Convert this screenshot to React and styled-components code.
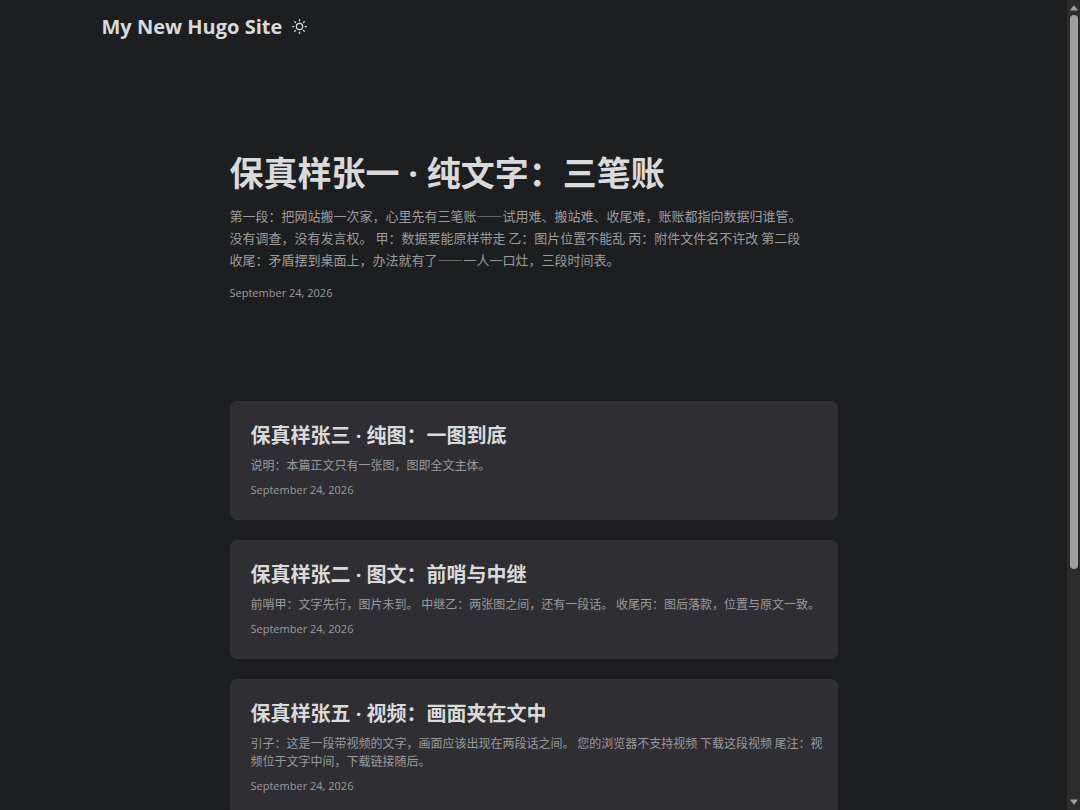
import React from "react";
import styled, { createGlobalStyle } from "styled-components";

const posts = [
  {
    title: "保真样张三 · 纯图：一图到底",
    summary: "说明：本篇正文只有一张图，图即全文主体。",
    date: "September 24, 2026",
  },
  {
    title: "保真样张二 · 图文：前哨与中继",
    summary:
      "前哨甲：文字先行，图片未到。 中继乙：两张图之间，还有一段话。 收尾丙：图后落款，位置与原文一致。",
    date: "September 24, 2026",
  },
  {
    title: "保真样张五 · 视频：画面夹在文中",
    summary:
      "引子：这是一段带视频的文字，画面应该出现在两段话之间。 您的浏览器不支持视频 下载这段视频 尾注：视\n频位于文字中间，下载链接随后。",
    date: "September 24, 2026",
  },
];

const SunIcon = () => (
  <svg
    width='15'
    height='15'
    viewBox='0 0 24 24'
    fill='none'
    stroke='currentColor'
    strokeWidth='2'
    strokeLinecap='round'
    strokeLinejoin='round'
    aria-hidden='true'
  >
    <circle cx='12' cy='12' r='5' />
    <line x1='12' y1='1' x2='12' y2='3' />
    <line x1='12' y1='21' x2='12' y2='23' />
    <line x1='4.22' y1='4.22' x2='5.64' y2='5.64' />
    <line x1='18.36' y1='18.36' x2='19.78' y2='19.78' />
    <line x1='1' y1='12' x2='3' y2='12' />
    <line x1='21' y1='12' x2='23' y2='12' />
    <line x1='4.22' y1='19.78' x2='5.64' y2='18.36' />
    <line x1='18.36' y1='5.64' x2='19.78' y2='4.22' />
  </svg>
);

const App = () => {
  return (
    <Shell lang='zh-CN'>
      <GlobalStyle />
      <Page>
        <Header>
          <Logo href='#'>My New Hugo Site</Logo>
          <ThemeToggle type='button' aria-label='Toggle theme'>
            <SunIcon />
          </ThemeToggle>
        </Header>
        <Main>
          <Hero>
            <HeroTitle>保真样张一 · 纯文字：三笔账</HeroTitle>
            <HeroText>
              {"第一段：把网站搬一次家，心里先有三笔账——试用难、搬站难、收尾难，账账都指向数据归谁管。\n没有调查，没有发言权。 甲：数据要能原样带走 乙：图片位置不能乱 丙：附件文件名不许改 第二段\n收尾：矛盾摆到桌面上，办法就有了——一人一口灶，三段时间表。"}
            </HeroText>
            <PostDate>September 24, 2026</PostDate>
          </Hero>
          {posts.map(({ title, summary, date }) => (
            <Card key={title}>
              <CardTitle>{title}</CardTitle>
              <CardText>{summary}</CardText>
              <PostDate>{date}</PostDate>
            </Card>
          ))}
        </Main>
      </Page>
      <ScrollTrack aria-hidden='true'>
        <Arrow viewBox='0 0 8 6'>
          <path d='M3.3 1 Q4 0 4.7 1 L7.6 4.8 Q7.8 5.6 7 5.6 H1 Q0.2 5.6 0.4 4.8 Z' />
        </Arrow>
        <ThumbLane>
          <Thumb />
        </ThumbLane>
        <Arrow viewBox='0 0 8 6'>
          <path d='M3.3 5 Q4 6 4.7 5 L7.6 1.2 Q7.8 0.4 7 0.4 H1 Q0.2 0.4 0.4 1.2 Z' />
        </Arrow>
      </ScrollTrack>
    </Shell>
  );
};

const GlobalStyle = createGlobalStyle`
  * {
    box-sizing: border-box;
    margin: 0;
    padding: 0;
  }

  body {
    background: #1d1e20;
    color: #dadadb;
    font-family: "Open Sans", "Noto Sans CJK SC", sans-serif;
  }
`;

const Shell = styled.div`
  display: grid;
  grid-template-columns: minmax(0, 1fr) 13px;
  height: 100vh;
`;

const Page = styled.div`
  overflow-y: auto;
  scrollbar-width: none;
`;

const Header = styled.header`
  display: flex;
  align-items: center;
  gap: 10px;
  max-width: 864px;
  height: 53px;
  margin: 0 auto;
`;

const Logo = styled.a`
  color: #dadadb;
  font-size: 20px;
  font-weight: 700;
  text-decoration: none;
`;

const ThemeToggle = styled.button`
  display: flex;
  border: none;
  background: none;
  color: #dadadb;
  cursor: pointer;
`;

const Main = styled.main`
  max-width: 608px;
  margin: 0 auto;
  padding-bottom: 20px;
`;

const Hero = styled.article`
  display: flex;
  flex-direction: column;
  justify-content: center;
  min-height: 348px;
  padding-bottom: 2px;
`;

const HeroTitle = styled.h1`
  font-size: 34px;
  line-height: 44px;
`;

const HeroText = styled.p`
  margin: 10px 0 14px;
  color: #9b9c9d;
  font-family: "Noto Sans CJK SC", sans-serif;
  font-size: 13px;
  line-height: 22px;
  white-space: pre-line;
`;

const Card = styled.article`
  margin-bottom: 20px;
  padding: 20px 8px 21px 20px;
  border: 1px solid #333333;
  border-radius: 7px;
  background: #2e2e33;
`;

const CardTitle = styled.h2`
  font-size: 20px;
  line-height: 28px;
`;

const CardText = styled.p`
  margin: 6px 0 8px;
  color: #9b9c9d;
  font-family: "Noto Sans CJK SC", sans-serif;
  font-size: 12px;
  line-height: 18px;
  white-space: pre-line;
`;

const PostDate = styled.footer`
  color: #9b9c9d;
  font-size: 11px;
  line-height: 16px;
`;

const ScrollTrack = styled.div`
  display: flex;
  flex-direction: column;
  align-items: center;
  gap: 4px;
  padding: 5px 0;
  background: #2c2c2c;
`;

const Arrow = styled.svg`
  width: 8px;
  height: 6px;
  fill: #9f9f9f;
`;

const ThumbLane = styled.div`
  flex: 1;
  width: 8px;
`;

const Thumb = styled.div`
  height: 71%;
  border-radius: 4px;
  background: #9f9f9f;
`;

export default App;
